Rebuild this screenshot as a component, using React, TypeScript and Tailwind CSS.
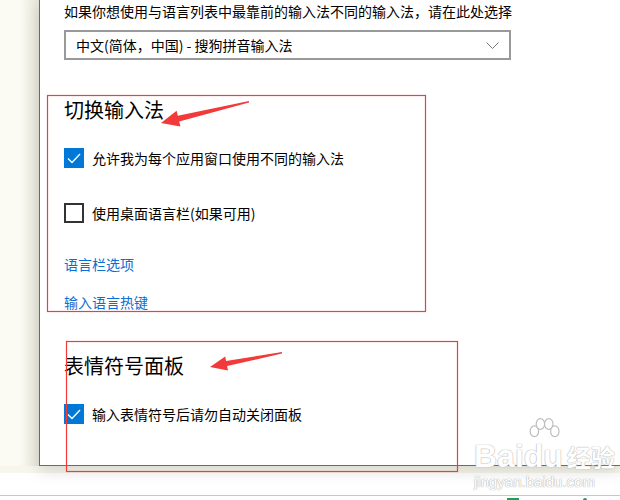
import React from 'react';

const Checked: React.FC = () => (
  <span className="flex h-[20px] w-[20px] shrink-0 items-center justify-center bg-[#0078d7]">
    <svg width="14" height="11" viewBox="0 0 14 11" fill="none">
      <path d="M1 5.5 L5 9.5 L13 1" stroke="#fff" strokeWidth="1.4" />
    </svg>
  </span>
);

const Unchecked: React.FC = () => (
  <span className="h-[20px] w-[20px] shrink-0 border-2 border-[#333]" />
);

const Row: React.FC<{ checked: boolean; label: string; className?: string }> = ({ checked, label, className }) => (
  <div className={`flex h-[20px] items-center gap-[8px] ${className ?? ''}`}>
    {checked ? <Checked /> : <Unchecked />}
    <span className="text-[14px] leading-[20px] text-black">{label}</span>
  </div>
);

const App: React.FC = () => {
  return (
    <div
      className="relative h-[500px] w-[620px] overflow-hidden bg-white"
      style={{ fontFamily: '"Noto Sans CJK SC", "Noto Sans", sans-serif' }}
    >
      <div className="flex h-[473px] bg-[#f6f6ec]">
        <div className="h-[466px] w-[39px] bg-gradient-to-r from-[#fbfbf3] via-[#fbfbf3] to-[#e4e4d8]" />
        <div className="relative z-10 h-[466px] w-[581px] border-b border-l border-[#6b6b6b] bg-white pl-[24px] shadow-[0_6px_14px_rgba(0,0,0,0.12)]">
          <p className="h-[22px] text-[14px] leading-[22px] text-black">
            如果你想使用与语言列表中最靠前的输入法不同的输入法，请在此处选择
          </p>
          <div className="mt-[8px] flex h-[30px] w-[447px] items-center justify-between border-2 border-[#999] pl-[10px] pr-[10px]">
            <span className="text-[14px] leading-[20px] text-black">中文(简体，中国) - 搜狗拼音输入法</span>
            <svg width="13" height="7" viewBox="0 0 13 7" fill="none">
              <path d="M0.5 0.5 L6.5 6.5 L12.5 0.5" stroke="#777" strokeWidth="1" />
            </svg>
          </div>

          <h2 className="mt-[36px] h-[28px] text-[20px] font-normal leading-[28px] text-black">切换输入法</h2>
          <Row checked label="允许我为每个应用窗口使用不同的输入法" className="mt-[24px]" />
          <Row checked={false} label="使用桌面语言栏(如果可用)" className="mt-[35px]" />
          <a className="mt-[31px] block h-[20px] text-[14px] leading-[20px] text-[#0a6fd3]">语言栏选项</a>
          <a className="mt-[18px] block h-[20px] text-[14px] leading-[20px] text-[#0a6fd3]">输入语言热键</a>

          <h2 className="mt-[40px] h-[28px] text-[20px] font-normal leading-[28px] text-black">表情符号面板</h2>
          <Row checked label="输入表情符号后请勿自动关闭面板" className="mt-[24px]" />
        </div>
      </div>

      <div className="h-[22px] bg-white" />
      <div className="relative h-[5px] border-t border-[#c8c8c8] bg-white">
        <span className="absolute left-[507px] top-[2px] h-[3px] w-[12px] bg-[#1e9e55]" />
        <span className="absolute left-[583px] top-[2px] h-[3px] w-[4px] rounded-t-full bg-[#1e9e55]" />
      </div>

      {/* annotations: red boxes and arrows drawn over the screenshot */}
      <svg className="pointer-events-none absolute left-0 top-0 z-20" width="620" height="500">
        <rect x="47.5" y="95.5" width="378" height="216" fill="none" stroke="#f53a3a" strokeWidth="1.2" />
        <rect x="66.5" y="341.5" width="391" height="130" fill="none" stroke="#f53a3a" strokeWidth="1.2" />
        <polygon
          points="161,123 176.6,110.8 177.8,115.7 249,101 249,102.5 179.2,121.5 180.4,126.4"
          fill="#f23a3a"
        />
        <polygon
          points="210,367 225.2,356.6 226.1,361 282,352 282,353.5 227.1,366 228,370.4"
          fill="#f23a3a"
        />
      </svg>

      {/* watermark */}
      <div className="pointer-events-none absolute left-[474px] top-[440px] z-30 flex flex-col items-start text-white [text-shadow:0_0_1px_#aaa,0_0_1px_#aaa]">
        <div className="flex items-end text-[32px] font-bold leading-[32px]" style={{ fontFamily: '"Liberation Sans", sans-serif' }}>
          <span>Bai</span>
          <span className="relative">
            du
            <svg className="absolute -top-[22px] left-[4px]" width="32" height="24" viewBox="0 0 26 20">
              <g fill="#fff" stroke="#bdbdbd" strokeWidth="1">
                <ellipse cx="5" cy="11" rx="3.5" ry="4.5" />
                <ellipse cx="10" cy="5" rx="3.5" ry="4.5" />
                <ellipse cx="17" cy="5" rx="3.5" ry="4.5" />
                <ellipse cx="22" cy="11" rx="3.5" ry="4.5" />
              </g>
            </svg>
          </span>
          <span className="ml-[4px] text-[24px] leading-[30px]" style={{ fontFamily: '"Noto Sans CJK SC", sans-serif' }}>经验</span>
        </div>
        <span className="mt-[2px] text-[15px] leading-[16px]" style={{ fontFamily: '"Liberation Sans", sans-serif' }}>jingyan.baidu.com</span>
      </div>
    </div>
  );
};

export default App;
